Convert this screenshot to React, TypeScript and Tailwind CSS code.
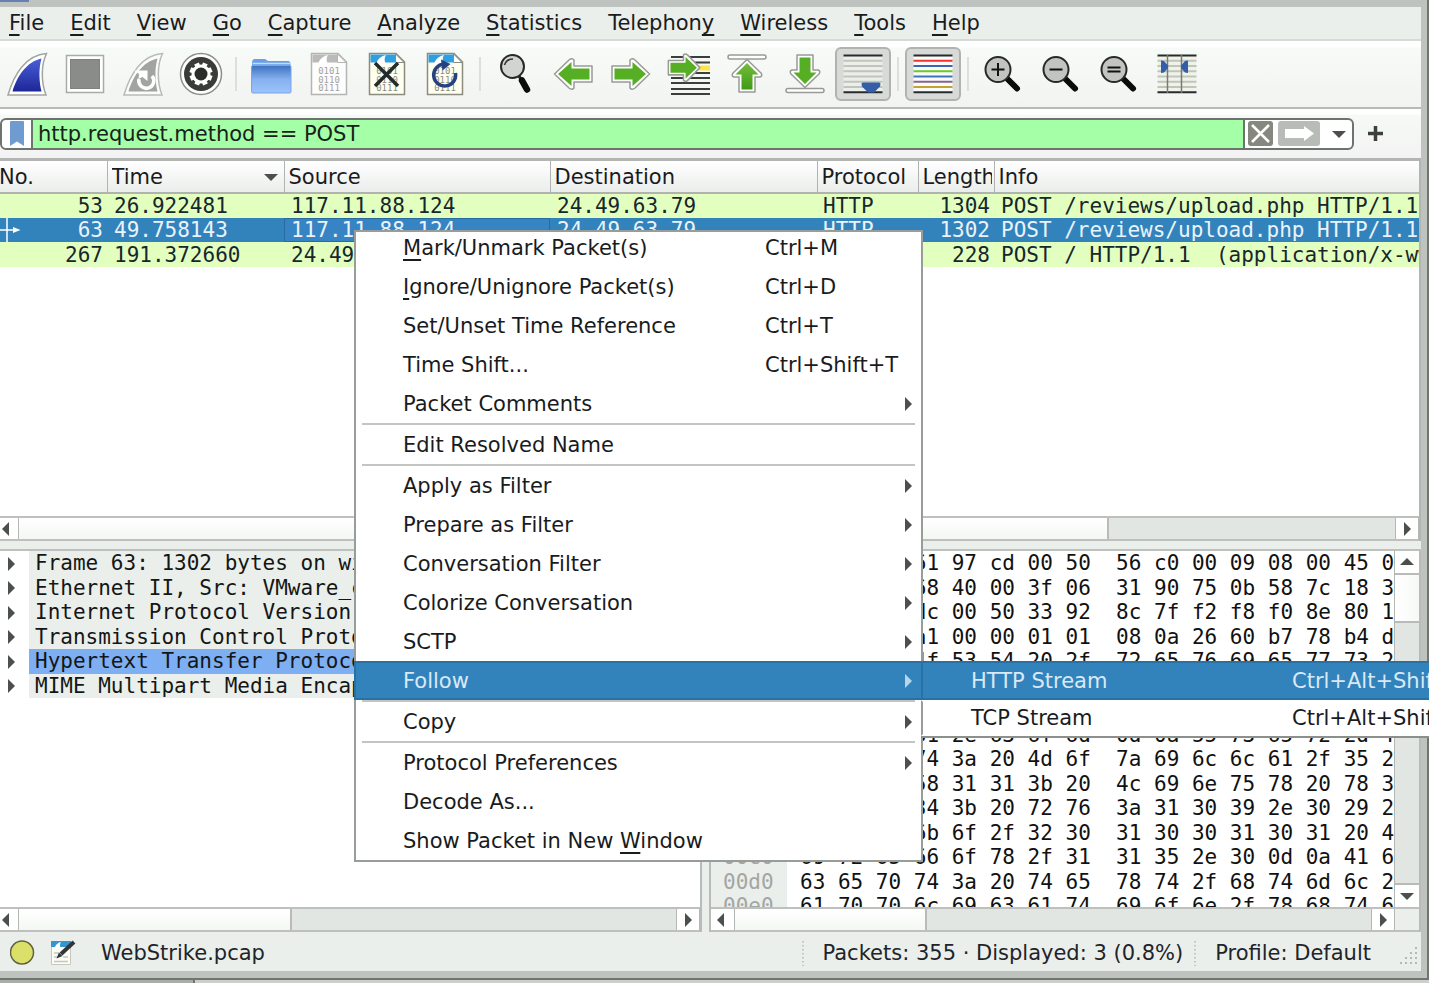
import React, { ReactNode } from 'react';

const MENUS: [string, string, string][] = [
  ['', 'F', 'ile'],
  ['', 'E', 'dit'],
  ['', 'V', 'iew'],
  ['', 'G', 'o'],
  ['', 'C', 'apture'],
  ['', 'A', 'nalyze'],
  ['', 'S', 'tatistics'],
  ['Telephon', 'y', ''],
  ['', 'W', 'ireless'],
  ['', 'T', 'ools'],
  ['', 'H', 'elp'],
];

const PACKETS = [
  { no: '53', time: '26.922481', src: '117.11.88.124', dst: '24.49.63.79', proto: 'HTTP', len: '1304', info: 'POST /reviews/upload.php HTTP/1.1', selected: false },
  { no: '63', time: '49.758143', src: '117.11.88.124', dst: '24.49.63.79', proto: 'HTTP', len: '1302', info: 'POST /reviews/upload.php HTTP/1.1', selected: true },
  { no: '267', time: '191.372660', src: '24.49.63.79', dst: '117.11.88.124', proto: 'HTTP', len: '228', info: 'POST / HTTP/1.1  (application/x-www-form-urlencoded)', selected: false },
];

const DETAILS = [
  'Frame 63: 1302 bytes on wire',
  'Ethernet II, Src: VMware_c0:00:09',
  'Internet Protocol Version 4',
  'Transmission Control Protocol',
  'Hypertext Transfer Protocol',
  'MIME Multipart Media Encapsulation',
];

const HEX: [string, string][] = [
  ['0000', '00 0c 29 61 97 cd 00 50  56 c0 00 09 08 00 45 00'],
  ['0010', '05 08 e1 68 40 00 3f 06  31 90 75 0b 58 7c 18 31'],
  ['0020', '3f 4f 9f dc 00 50 33 92  8c 7f f2 f8 f0 8e 80 18'],
  ['0030', '01 f6 c4 a1 00 00 01 01  08 0a 26 60 b7 78 b4 d0'],
  ['0040', '4b 1c 50 4f 53 54 20 2f  72 65 76 69 65 77 73 2f'],
  ['0050', '75 70 6c 6f 61 64 2e 70  68 70 20 48 54 54 50 2f'],
  ['0060', '31 2e 31 0d 0a 48 6f 73  74 3a 20 73 68 6f 70 6f'],
  ['0070', '72 6f 6d 61 2e 63 6f 6d  0d 0a 55 73 65 72 2d 41'],
  ['0080', '67 65 6e 74 3a 20 4d 6f  7a 69 6c 6c 61 2f 35 2e'],
  ['0090', '30 20 28 58 31 31 3b 20  4c 69 6e 75 78 20 78 38'],
  ['00a0', '36 5f 36 34 3b 20 72 76  3a 31 30 39 2e 30 29 20'],
  ['00b0', '47 65 63 6b 6f 2f 32 30  31 30 30 31 30 31 20 46'],
  ['00c0', '69 72 65 66 6f 78 2f 31  31 35 2e 30 0d 0a 41 63'],
  ['00d0', '63 65 70 74 3a 20 74 65  78 74 2f 68 74 6d 6c 2c'],
  ['00e0', '61 70 70 6c 69 63 61 74  69 6f 6e 2f 78 68 74 6d'],
];

type Item = { text: ReactNode; keys?: string; sub?: boolean; active?: boolean } | 'separator';

const U = ({ children }: { children: ReactNode }) => (
  <span className="underline decoration-2 underline-offset-4 [text-decoration-skip-ink:none]">{children}</span>
);

const CONTEXT: Item[] = [
  { text: <><U>M</U>ark/Unmark Packet(s)</>, keys: 'Ctrl+M' },
  { text: <><U>I</U>gnore/Unignore Packet(s)</>, keys: 'Ctrl+D' },
  { text: 'Set/Unset Time Reference', keys: 'Ctrl+T' },
  { text: 'Time Shift...', keys: 'Ctrl+Shift+T' },
  { text: 'Packet Comments', sub: true },
  'separator',
  { text: 'Edit Resolved Name' },
  'separator',
  { text: 'Apply as Filter', sub: true },
  { text: 'Prepare as Filter', sub: true },
  { text: 'Conversation Filter', sub: true },
  { text: 'Colorize Conversation', sub: true },
  { text: 'SCTP', sub: true },
  { text: 'Follow', sub: true, active: true },
  'separator',
  { text: 'Copy', sub: true },
  'separator',
  { text: 'Protocol Preferences', sub: true },
  { text: 'Decode As...' },
  { text: <>Show Packet in New <U>W</U>indow</> },
];

/* ---------- icons ---------- */

const Svg = ({ children }: { children: ReactNode }) => (
  <svg viewBox="0 0 46 46" className="size-[46px] shrink-0" aria-hidden="true">{children}</svg>
);

const FIN = 'M4 44 C10 23 22 4 42.500 2.500 C37 14 37 31 42 44 Z';
const FIN_IN = 'M8.500 40.500 C13 25 23 10.500 37.500 7.500 C34.500 18 35 30 37.500 40.500 Z';

const StartIcon = () => (
  <Svg>
    <defs><linearGradient id="fin" x1="0" y1="0" x2="0" y2="1"><stop offset="0" stopColor="#4a5fd8" /><stop offset="1" stopColor="#1d2796" /></linearGradient></defs>
    <path d={FIN} fill="#fff" stroke="#a3a5a1" strokeWidth="1.500" />
    <path d={FIN_IN} fill="url(#fin)" />
  </Svg>
);
const StopIcon = () => (
  <Svg>
    <rect x="4.500" y="4.500" width="37" height="37" fill="#fff" stroke="#a9aba8" strokeWidth="1.500" />
    <rect x="8.500" y="8.500" width="29" height="29" fill="#8a8c8a" stroke="#7f817f" />
  </Svg>
);
const RestartIcon = () => (
  <Svg>
    <path d={FIN} fill="#fbfcfb" stroke="#b9bbb8" strokeWidth="1.500" />
    <path d={FIN_IN} fill="#a2a4a2" />
    <path d="M19 28 A7.500 7.500 0 1 0 32 25" fill="none" stroke="#fff" strokeWidth="3.500" />
    <path d="M14 19.500 H27.500 V30 L22.500 26 L18.500 28 L19 23 Z" fill="#fff" />
  </Svg>
);
const OptionsIcon = () => (
  <Svg>
    <circle cx="23" cy="23" r="20.500" fill="#fff" stroke="#8d8f8c" strokeWidth="1.500" />
    <circle cx="23" cy="23" r="17" fill="#3a3c3a" />
    {[0, 45, 90, 135].map((a) => (
      <rect key={a} x="20.500" y="11.500" width="5" height="23" fill="#fff" transform={`rotate(${a + 22} 23 23)`} />
    ))}
    <circle cx="23" cy="23" r="9.500" fill="#fff" />
    <circle cx="23" cy="23" r="6.500" fill="#2b2d2b" />
  </Svg>
);
const OpenIcon = () => (
  <Svg>
    <defs>
      <linearGradient id="folder" x1="0" y1="0" x2="0" y2="1"><stop offset="0" stopColor="#3c72c0" /><stop offset=".5" stopColor="#86b0f0" /><stop offset="1" stopColor="#9cc4fb" /></linearGradient>
    </defs>
    <path d="M4 12 Q4 8 7 8 L17 8 L20 10 L40 10 Q42.500 10 42.500 13 L42.500 16 L4 16 Z" fill="#6a9ee6" />
    <path d="M4.500 12.500 H42" stroke="#c3dafb" strokeWidth="1.500" />
    <rect x="3.500" y="14.500" width="39.500" height="27.500" rx="1.500" fill="url(#folder)" stroke="#78a6ea" />
  </Svg>
);

const Sheet = ({ tone, children }: { tone: 'gray' | 'blue'; children?: ReactNode }) => {
  const blue = tone === 'blue';
  return (
    <Svg>
      <path d="M5.500 2.500 H32 L40.500 11 V43.500 H5.500 Z" fill={blue ? '#fffff0' : '#fdfdfd'} stroke={blue ? '#8b8c80' : '#b4b5b3'} strokeWidth="1.500" />
      <path d="M6.500 3.500 H31 V11.500 H6.500 Z" fill={blue ? '#2e9fe0' : '#b9bab9'} />
      <path d="M12 12.500 Q15 5 22 4 Q19.500 8 21.500 12.500 Z" fill="#fff" />
      <path d="M31.500 3 V11.500 H40 Z" fill="#fff" stroke={blue ? '#8b8c80' : '#b4b5b3'} />
      <g fill={blue ? '#8a8b84' : '#a2a3a2'} fontFamily="'DejaVu Sans Mono', monospace" fontSize="9" textAnchor="middle">
        <text x="23" y="23">0101</text>
        <text x="23" y="31.500">0110</text>
        <text x="23" y="39.500">0111</text>
      </g>
      {children}
    </Svg>
  );
};
const CloseFileIcon = () => (
  <Sheet tone="blue"><path d="M11 12 L34 35 M34 12 L11 35" stroke="#222c2d" strokeWidth="3.500" /></Sheet>
);
const ReloadIcon = () => (
  <Sheet tone="blue">
    <path d="M22 13 A11 11 0 1 0 33.500 22" fill="none" stroke="#26417f" strokeWidth="3.500" />
    <path d="M19 8.500 L28.500 13 L20.500 19.500 Z" fill="#26417f" />
  </Sheet>
);
const FindIcon = () => (
  <Svg>
    <path d="M27 25 L30 30" stroke="#222" strokeWidth="3" />
    <path d="M30 29.500 L35 38.500" stroke="#0c0c0c" strokeWidth="6.500" strokeLinecap="round" />
    <circle cx="20.500" cy="15.500" r="11.500" fill="#d2d4d2" stroke="#272927" strokeWidth="2" />
    <path d="M12.500 14 Q14.500 8 21 8" fill="none" stroke="#333" strokeWidth="1.500" />
  </Svg>
);

const GreenDefs = () => (
  <defs><linearGradient id="green" x1="0" y1="0" x2="0" y2="1"><stop offset="0" stopColor="#76bd3c" /><stop offset="1" stopColor="#3f9a14" /></linearGradient></defs>
);
const RIGHT = 'M4 15 H22 V9 Q24 6.500 27 9 L41.500 23 L27 37 Q24 39.500 22 37 V31 H4 Z';
const RIGHT_IN = 'M6.500 17.500 H24.500 V11 L38 23 L24.500 35 V28.500 H6.500 Z';
const Arrow = ({ turn }: { turn: string }) => (
  <g transform={turn}>
    <path d={RIGHT} fill="#fff" stroke="#989a96" strokeWidth="1.500" strokeLinejoin="round" />
    <path d={RIGHT_IN} fill="#56ae24" />
  </g>
);
const BackIcon = () => <Svg><Arrow turn="rotate(180 23 23)" /></Svg>;
const ForwardIcon = () => <Svg><Arrow turn="" /></Svg>;
const JumpIcon = () => (
  <Svg>
    {[6, 11.5, 22, 27, 32, 38, 43].map((y) => <path key={y} d={`M5 ${y} H44`} stroke="#39403c" strokeWidth="2" />)}
    <rect x="33" y="14.500" width="11" height="5" fill="#fde44a" />
    <g transform="translate(-1 -4) scale(.84 .9)">
      <path d={RIGHT} fill="#fff" stroke="#989a96" strokeWidth="1.800" strokeLinejoin="round" />
      <path d={RIGHT_IN} fill="#56ae24" />
    </g>
  </Svg>
);
const UP = 'M15 41 V26 H10 Q7 25 9 22 L23 8.500 L37 22 Q39 25 36 26 H31 V41 Z';
const UP_IN = 'M17.500 38.500 V23.500 H11.500 L23 12 L34.500 23.500 H28.500 V38.500 Z';
const TopIcon = () => (
  <Svg>
    <GreenDefs />
    <rect x="4" y="4" width="38" height="4" rx="2" fill="#fff" stroke="#989a96" strokeWidth="1.500" />
    <path d={UP} fill="#fff" stroke="#989a96" strokeWidth="1.500" strokeLinejoin="round" />
    <path d={UP_IN} fill="url(#green)" />
  </Svg>
);
const BottomIcon = () => (
  <Svg>
    <rect x="4" y="37.500" width="38" height="4" rx="2" fill="#fff" stroke="#989a96" strokeWidth="1.500" />
    <g transform="rotate(180 23 22.500)">
      <path d={UP} fill="#fff" stroke="#989a96" strokeWidth="1.500" strokeLinejoin="round" />
      <path d={UP_IN} fill="#56ae24" />
    </g>
  </Svg>
);
const LineRows = ({ colors }: { colors: string[] }) => (
  <>{colors.map((c, i) => <rect key={i} x="3.500" y={3.5 + i * 5.25} width="39" height="2" fill={c} />)}</>
);
const PALE = '#bfc5b8';
const AutoScrollIcon = () => (
  <Svg>
    <rect x="3.500" y="4" width="39" height="38" fill="#eceeec" />
    <LineRows colors={['#262c2b', PALE, PALE, PALE, PALE, PALE, PALE, '#262c2b']} />
    <path d="M21.500 33 Q21.500 31.500 23 31.500 H39 Q40.500 31.500 40.500 33 L40 35.500 L34 41.500 H28 L22 35.500 Z" fill="#345ea8" />
  </Svg>
);
const ColorizeIcon = () => (
  <Svg>
    <rect x="3.500" y="4" width="39" height="38" fill="#fafafa" />
    <LineRows colors={['#262c2b', '#f0342e', '#3f66b5', '#67cb2b', '#3f74bb', '#83658f', '#c2a42b', '#262c2b']} />
  </Svg>
);
const Zoomer = ({ d }: { d: string }) => (
  <Svg>
    <path d="M28 28.500 L37 37.500" stroke="#0b0b0b" strokeWidth="6" strokeLinecap="round" />
    <circle cx="18" cy="18.500" r="12.500" fill="#c2c4c2" stroke="#272927" strokeWidth="2" />
    <path d={d} stroke="#111" strokeWidth="2" />
  </Svg>
);
const ColumnsIcon = () => (
  <Svg>
    <rect x="3.500" y="4" width="39" height="38" fill="#f0f3ec" />
    <LineRows colors={['#262c2b', PALE, PALE, PALE, PALE, PALE, PALE, '#262c2b']} />
    <path d="M13.500 4 V42 M27.500 4 V42" stroke="#777b76" strokeWidth="1.500" />
    <path d="M7 9.500 L10 10 L14 14.500 V17 L10 21.500 L7 22 Z M34 9.500 L31 10 L27 14.500 V17 L31 21.500 L34 22 Z" fill="#345ea8" />
  </Svg>
);

const TOOLS: { name: string; icon?: ReactNode; pressed?: boolean }[] = [
  { name: 'Start capture', icon: <StartIcon /> },
  { name: 'Stop capture', icon: <StopIcon /> },
  { name: 'Restart capture', icon: <RestartIcon /> },
  { name: 'Capture options', icon: <OptionsIcon /> },
  { name: 'separator' },
  { name: 'Open', icon: <OpenIcon /> },
  { name: 'Save', icon: <Sheet tone="gray" /> },
  { name: 'Close', icon: <CloseFileIcon /> },
  { name: 'Reload', icon: <ReloadIcon /> },
  { name: 'separator' },
  { name: 'Find packet', icon: <FindIcon /> },
  { name: 'Previous packet', icon: <BackIcon /> },
  { name: 'Next packet', icon: <ForwardIcon /> },
  { name: 'Go to packet', icon: <JumpIcon /> },
  { name: 'First packet', icon: <TopIcon /> },
  { name: 'Last packet', icon: <BottomIcon /> },
  { name: 'Auto scroll', icon: <AutoScrollIcon />, pressed: true },
  { name: 'separator' },
  { name: 'Colorize', icon: <ColorizeIcon />, pressed: true },
  { name: 'separator' },
  { name: 'Zoom in', icon: <Zoomer d="M11.500 18.500 H24.500 M18 12 V25" /> },
  { name: 'Zoom out', icon: <Zoomer d="M11.500 18.500 H24.500" /> },
  { name: 'Normal size', icon: <Zoomer d="M11.500 16.500 H24.500 M11.500 20.500 H24.500" /> },
  { name: 'Resize columns', icon: <ColumnsIcon /> },
];

const Tri = ({ dir, className = '' }: { dir: 'left' | 'right' | 'up' | 'down'; className?: string }) => {
  const d = {
    left: 'M9 0 V14 L2 7 Z',
    right: 'M4 0 V14 L11 7 Z',
    up: 'M0 10 H14 L7 3 Z',
    down: 'M0 4 H14 L7 11 Z',
  }[dir];
  return <svg viewBox="0 0 14 14" className={`size-3.5 shrink-0 fill-current ${className}`} aria-hidden="true"><path d={d} /></svg>;
};

/* ---------- pieces ---------- */

const Toolbar = () => (
  <div className="-ml-0.5 flex h-[66px] items-center">
    {TOOLS.map((t, i) =>
      t.icon ? (
        <div key={i} className="flex w-[58px] shrink-0 justify-center">
          <button
            type="button"
            aria-label={t.name}
            className={`flex h-[54px] w-14 items-center justify-center rounded-md border-2 ${t.pressed ? 'border-[#b0b3b0] bg-[#d8dad8]' : 'border-transparent'}`}
          >
            {t.icon}
          </button>
        </div>
      ) : (
        <div key={i} className="flex w-3 shrink-0 justify-center"><div className="h-[34px] w-0.5 bg-[#dcdfdc]" /></div>
      ),
    )}
  </div>
);

const HScroll = ({ thumb, start }: { thumb: string; start: string }) => (
  <div className="flex h-[25px] shrink-0 border-y-2 border-[#bdc0bd] bg-[#e2e6e2] text-[#4c504d]">
    <button type="button" aria-label="Scroll left" className={`flex items-center border-r border-[#b4b8b4] bg-white ${start}`}><Tri dir="left" /></button>
    <div className="flex flex-1">
      <div className={`border-r-2 border-[#b8bbb8] bg-gradient-to-b from-white to-[#f4f7f4] ${thumb}`} />
    </div>
    <button type="button" aria-label="Scroll right" className="flex w-6 items-center justify-center border-x border-[#b4b8b4] bg-white"><Tri dir="right" /></button>
  </div>
);

const MONO = "font-['DejaVu_Sans_Mono',monospace] text-[21px] leading-6";

const PacketList = () => (
  <section className="flex h-[383px] shrink-0 flex-col border-t-[3px] border-r-2 border-[#b2b5b2] bg-white">
    <div className="flex-1 overflow-hidden">
      <table className="-ml-px w-[calc(100%+1px)] table-fixed border-collapse">
        <colgroup>
          <col className="w-[108px]" /><col className="w-[177px]" /><col className="w-[266px]" /><col className="w-[267px]" />
          <col className="w-[101px]" /><col className="w-[76px]" /><col />
        </colgroup>
        <thead>
          <tr className="h-8 bg-gradient-to-b from-white to-[#e9edea] text-left text-[21px] leading-6">
            {['No.', 'Time', 'Source', 'Destination', 'Protocol', 'Length', 'Info'].map((h) => (
              <th
                key={h}
                className={`overflow-hidden border-b-2 border-[#b0b3b0] pr-0.5 font-normal whitespace-nowrap ${h === 'No.' ? 'pl-0' : 'pl-1'} ${h === 'Info' ? '' : 'border-r'}`}
              >
                <div className="flex items-center justify-between overflow-hidden">
                  <span>{h}</span>
                  {h === 'Time' && <Tri dir="down" className="mr-1 text-[#4c504d]" />}
                </div>
              </th>
            ))}
          </tr>
        </thead>
        <tbody className={MONO}>
          {PACKETS.map((p) => (
            <tr
              key={p.no}
              className={`h-6 whitespace-pre odd:h-[25px] ${p.selected ? 'bg-[#3283bc] text-[#eaf3fa]' : 'bg-[#e3ffbf] text-[#16272e]'}`}
            >
              <td className="relative pr-1 text-right">
                {p.selected && (
                  <svg viewBox="0 0 22 24" className="absolute top-0 left-0 h-full w-[22px]" aria-hidden="true">
                    <path d="M8 0 V24 M0 12 H14" stroke="#fff" strokeWidth="1.500" />
                    <path d="M14 9 L21.500 12 L14 15 Z" fill="#fff" />
                  </svg>
                )}
                {p.no}
              </td>
              <td className="pl-[7px]">{p.time}</td>
              <td className={`pl-[7px] ${p.selected ? 'bg-[#3684c4] shadow-[inset_0_0_0_1px_#286c9f]' : ''}`}>{p.src}</td>
              <td className="pl-[7px]">{p.dst}</td>
              <td className="pl-1.5">{p.proto}</td>
              <td className="pr-1 text-right">{p.len}</td>
              <td className="overflow-hidden pl-[7px]">{p.info}</td>
            </tr>
          ))}
        </tbody>
      </table>
    </div>
    <HScroll thumb="w-[79.2%]" start="w-[19px]" />
  </section>
);

const DetailsPane = () => (
  <section className="flex min-w-0 flex-[702] flex-col border-r-2 border-[#b8bbb8] bg-white">
    <ul className={`flex-1 overflow-hidden text-[#141616] ${MONO}`}>
      {DETAILS.map((d, i) => (
        <li key={d} className="flex h-[25px] items-center even:h-6">
          <Tri dir="right" className="mr-[11px] ml-1 text-[#4c504d]" />
          <span className={`h-full flex-1 overflow-hidden pl-1.5 whitespace-pre ${i === 4 ? 'bg-[#7eaff3]' : 'bg-[#ebefeb]'}`}>{d}</span>
        </li>
      ))}
    </ul>
    <HScroll thumb="w-[41.6%]" start="w-[19px]" />
  </section>
);

const BytesPane = () => (
  <section className="flex min-w-0 flex-[712] flex-col border-x-2 border-[#b8bbb8] bg-white">
    <div className="flex min-h-0 flex-1">
      <div className="min-w-0 flex-1 overflow-hidden">
        <table className={`w-full table-fixed border-collapse ${MONO}`}>
          <colgroup><col className="w-[76px]" /><col /></colgroup>
          <tbody>
            {HEX.map(([offset, bytes]) => (
              <tr key={offset} className="h-6 whitespace-pre even:h-[25px]">
                <td className="bg-[#ebefeb] pl-3 text-[#a3a6a3]">{offset}</td>
                <td className="overflow-hidden pl-[13px] text-[#111]">{bytes}</td>
              </tr>
            ))}
          </tbody>
        </table>
      </div>
      <div className="flex w-[25px] flex-col border-l border-[#b4b8b4] bg-[#e2e6e2] text-[#4c504d]">
        <button type="button" aria-label="Scroll up" className="flex h-6 items-center justify-center border-b-2 border-[#b8bbb8] bg-white"><Tri dir="up" /></button>
        <div className="flex-1"><div className="h-12 border-b-2 border-[#b8bbb8] bg-gradient-to-r from-white to-[#f6f9f6]" /></div>
        <button type="button" aria-label="Scroll down" className="flex h-6 items-center justify-center border-t-2 border-[#b8bbb8] bg-white"><Tri dir="down" /></button>
      </div>
    </div>
    <div className="flex">
      <div className="flex-1"><HScroll thumb="w-[30.2%]" start="w-6 pl-1" /></div>
      <div className="w-6 border-y-2 border-[#bdc0bd] bg-[#ebefeb]" />
    </div>
  </section>
);

const DotLine = () => (
  <svg viewBox="0 0 4 26" className="h-[26px] w-1 shrink-0" aria-hidden="true">
    <path d="M2 1 V26" stroke="#b5b9b5" strokeWidth="1.500" strokeDasharray="1.500 2.500" />
  </svg>
);

const StatusBar = () => (
  <footer className="flex h-[39px] shrink-0 items-center pt-0.5 pl-2.5 text-[21px] leading-6 text-[#20242a]">
    <svg viewBox="0 0 26 26" className="size-6.5 shrink-0" aria-hidden="true">
      <circle cx="12" cy="12.500" r="11.500" fill="#dbe069" stroke="#5f6440" strokeWidth="1.500" />
    </svg>
    <svg viewBox="0 0 26 26" className="ml-3.5 size-6.5 shrink-0" aria-hidden="true">
      <path d="M1.500 1.500 H20.500 V24.500 H1.500 Z" fill="#fdfdf6" stroke="#c6c8c0" />
      <path d="M1 1 H21 V7 H1 Z" fill="#3496d0" />
      <path d="M4 9 Q6 3 11 2 Q9 5 11 9 Z" fill="#fff" />
      <path d="M4 13 H9 M4 17 H8 M4 21.500 H18 M13 17 H18" stroke="#c3c5c0" strokeWidth="1.500" />
      <path d="M11 14 L24 2" stroke="#333638" strokeWidth="4" />
      <path d="M6.500 18.500 L9 12.500 L12.500 16 Z" fill="#333638" />
    </svg>
    <span className="ml-[25px]">WebStrike.pcap</span>
    <div className="ml-auto flex items-center">
      <DotLine />
      <span className="ml-[18px]">Packets: 355 · Displayed: 3 (0.8%)</span>
      <span className="ml-2.5 flex"><DotLine /></span>
      <span className="ml-[18px]">Profile: Default</span>
    </div>
    <svg viewBox="0 0 24 24" className="mt-2 mr-0.5 ml-6 size-6 shrink-0" aria-hidden="true">
      {[[20, 2], [15, 7], [20, 7], [10, 12], [15, 12], [20, 12], [5, 17], [10, 17], [15, 17], [20, 17]].map(([x, y]) => (
        <rect key={`${x}-${y}`} x={x} y={y} width="2" height="2" fill="#b5b9b5" />
      ))}
    </svg>
  </footer>
);

const ContextMenu = () => (
  <div className="absolute top-[230px] left-[354px]">
    <div role="menu" className="w-[569px] border-2 border-[#999d9a] bg-white text-[21px] leading-6 text-[#191b1d]">
      <div className="-mx-0.5 -mt-1">
        {CONTEXT.map((item, i) =>
          item === 'separator' ? (
            <div key={i} role="separator" className="mx-2 h-0.5 bg-[#c3c5c3]" />
          ) : (
            <button
              key={i}
              type="button"
              role="menuitem"
              className={`flex h-[39px] w-full items-center border-2 pr-1.5 pl-[47px] text-left ${item.active ? 'border-[#2a71a3] bg-[#3283bc] text-[#d9e9f5]' : 'border-transparent'}`}
            >
              <span className="w-[362px]">{item.text}</span>
              <span className="whitespace-nowrap">{item.keys}</span>
              {item.sub && <Tri dir="right" className={`ml-auto ${item.active ? 'text-[#b9d5ea]' : 'text-[#4c504d]'}`} />}
            </button>
          ),
        )}
      </div>
    </div>
    <div role="menu" className="absolute top-[431px] left-[567px] w-[570px] border-b-2 border-[#8c908d] bg-white text-[21px] leading-6 text-[#191b1d]">
      {[['HTTP Stream', 'Ctrl+Alt+Shift+H'], ['TCP Stream', 'Ctrl+Alt+Shift+T']].map(([name, keys], i) => (
        <button
          key={name}
          type="button"
          role="menuitem"
          className={`flex w-full items-center border-2 pl-12 text-left ${i === 0 ? 'h-[39px] border-[#2a71a3] bg-[#3283bc] text-[#d9e9f5]' : 'h-9 border-transparent border-l-[#999d9a]'}`}
        >
          <span className="w-[321px]">{name}</span>
          <span className="whitespace-nowrap">{keys}</span>
        </button>
      ))}
    </div>
  </div>
);

export default function App() {
  return (
    <div className="relative flex h-screen flex-col overflow-hidden bg-[#cdcfcd] font-['DejaVu_Sans',sans-serif] text-[#191b1d]">
      <div className="flex min-h-0 flex-1 flex-col border-r-2 border-b-2 border-[#6f7571] bg-[#bec3bf]">
        <div className="h-[7px] shrink-0"><div className="h-0.5 w-[29px] bg-[#6682b5]" /></div>
        <div className="mr-1.5 mb-[7px] flex min-h-0 flex-1 flex-col bg-[#ebefeb]">
          <nav className="flex h-[34px] shrink-0 items-center gap-[26px] border-b-2 border-[#d6dad6] pl-[9px] text-[21px] leading-6">
            {MENUS.map(([a, u, b]) => (
              <button key={a + u + b} type="button">{a}<U>{u}</U>{b}</button>
            ))}
          </nav>
          <div className="shrink-0 border-b-2 border-[#b7bbb8] bg-linear-[to_bottom,#fff_6px,#f7fbf7_7px,#f2f3f2]">
            <Toolbar />
          </div>
          <div className="flex h-[49px] shrink-0 items-center bg-linear-[to_bottom,#fff_5px,#f6f9f6_6px,#f3f3f3]">
            <div className="flex h-8 flex-1 items-center rounded-md border-2 border-[#6d736f] bg-white">
              <button type="button" aria-label="Bookmarks" className="flex w-[29px] shrink-0 justify-center">
                <svg viewBox="0 0 14 25" className="h-[25px] w-3.5" aria-hidden="true"><path d="M0 1 Q0 0 1 0 H13 Q14 0 14 1 V25 L7 20.500 L0 25 Z" fill="#6f9bd0" /></svg>
              </button>
              <input
                aria-label="Display filter"
                defaultValue="http.request.method == POST"
                className="h-full min-w-0 flex-1 border-x-2 border-[#6d736f] bg-[#a4ffa6] px-[5px] text-[21px] leading-6 text-[#17221a] outline-none"
              />
              <button type="button" aria-label="Clear" className="ml-[3px] shrink-0">
                <svg viewBox="0 0 25 25" className="size-[25px]" aria-hidden="true">
                  <rect width="25" height="25" rx="3" fill="#86877f" /><path d="M4 4 L21 21 M21 4 L4 21" stroke="#fff" strokeWidth="2.500" />
                </svg>
              </button>
              <button type="button" aria-label="Apply" className="ml-[5px] shrink-0">
                <svg viewBox="0 0 42 25" className="h-[25px] w-[42px]" aria-hidden="true">
                  <rect width="42" height="25" rx="3" fill="#b9bbb9" /><path d="M7 8 H26 V5 L36 12.500 L26 20 V17 H7 Z" fill="#fff" />
                </svg>
              </button>
              <button type="button" aria-label="Filter history" className="mr-1.5 ml-3 shrink-0 text-[#4c504d]"><Tri dir="down" className="size-3" /></button>
            </div>
            <button type="button" aria-label="Add filter button" className="mr-[38px] ml-3.5 shrink-0">
              <svg viewBox="0 0 15 15" className="size-[15px]" aria-hidden="true"><path d="M7.500 0 V15 M0 7.500 H15" stroke="#3c403d" strokeWidth="3.500" /></svg>
            </button>
          </div>
          <PacketList />
          <div className="mt-2 flex min-h-0 flex-1 gap-[7px]">
            <div className="flex min-w-0 flex-[702] border-t-2 border-[#bdc0bd]"><DetailsPane /></div>
            <div className="flex min-w-0 flex-[712] border-t-2 border-[#bdc0bd]"><BytesPane /></div>
          </div>
          <StatusBar />
        </div>
      </div>
      <div className="h-[3px] w-[195px] shrink-0 border-r-2 border-[#6f7571] bg-[#a9adaa]" />
      <ContextMenu />
    </div>
  );
}
